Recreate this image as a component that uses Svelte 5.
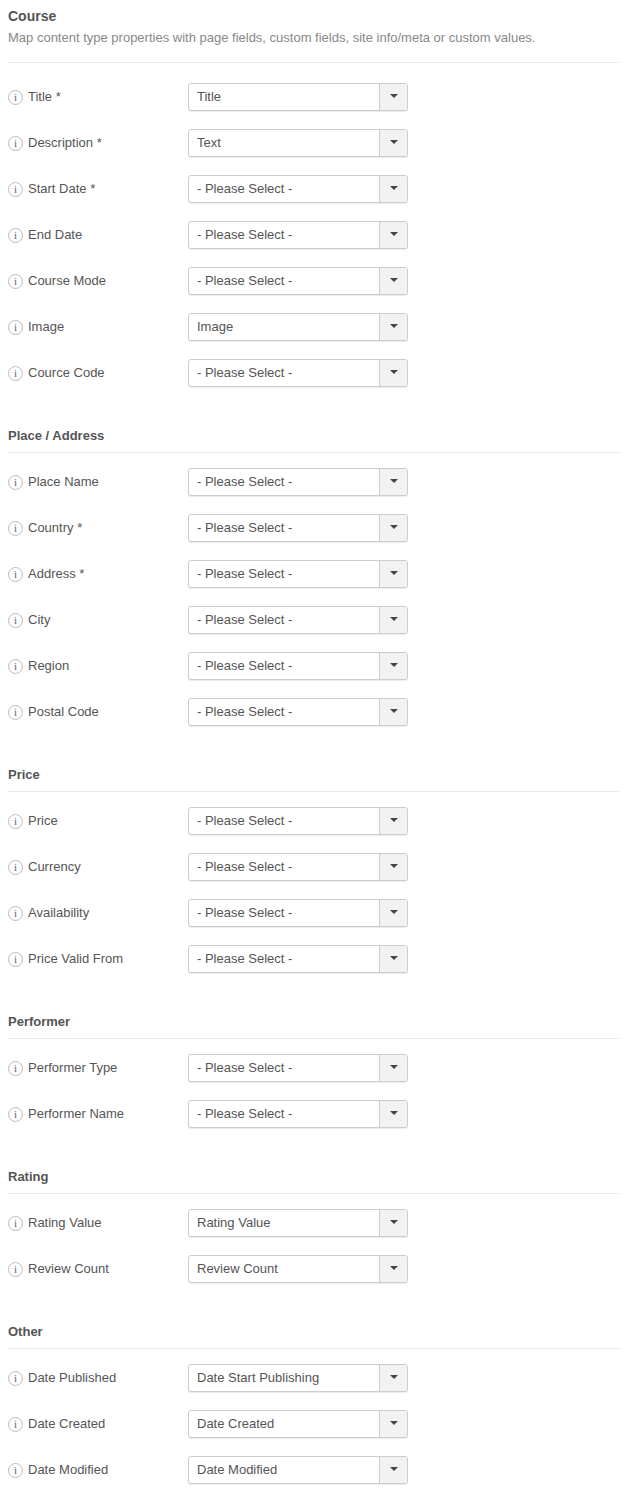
<script>
  const P = '- Please Select -';
  const sections = [
    { title: 'Course', desc: 'Map content type properties with page fields, custom fields, site info/meta or custom values.', rows: [
      ['Title *', 'Title'], ['Description *', 'Text'], ['Start Date *', P], ['End Date', P], ['Course Mode', P], ['Image', 'Image'], ['Cource Code', P] ] },
    { title: 'Place / Address', rows: [
      ['Place Name', P], ['Country *', P], ['Address *', P], ['City', P], ['Region', P], ['Postal Code', P] ] },
    { title: 'Price', rows: [
      ['Price', P], ['Currency', P], ['Availability', P], ['Price Valid From', P] ] },
    { title: 'Performer', rows: [
      ['Performer Type', P], ['Performer Name', P] ] },
    { title: 'Rating', rows: [
      ['Rating Value', 'Rating Value'], ['Review Count', 'Review Count'] ] },
    { title: 'Other', rows: [
      ['Date Published', 'Date Start Publishing'], ['Date Created', 'Date Created'], ['Date Modified', 'Date Modified'] ] }
  ];
</script>

<div class="page">
  {#each sections as s, i}
    <section class:first={i === 0}>
      <header class:main={i === 0}>
        <h3>{s.title}</h3>
        {#if s.desc}<p>{s.desc}</p>{/if}
      </header>
      <div class="rows">
        {#each s.rows as r}
          <div class="row">
            <label>
              <span class="info">i</span>
              <span class="name">{r[0]}</span>
            </label>
            <div class="select">
              <div class="value">{r[1]}</div>
              <div class="caret"><i></i></div>
            </div>
          </div>
        {/each}
      </div>
    </section>
  {/each}
</div>

<style>
  :global(body) {
    margin: 0;
    background: #fff;
  }
  .page {
    box-sizing: border-box;
    width: 630px;
    height: 1498px;
    overflow: hidden;
    padding: 8px 10px 0 8px;
    font-family: "Liberation Sans", Arial, sans-serif;
    font-size: 13px;
    color: #555;
  }
  section {
    margin-top: 40px;
  }
  section.first {
    margin-top: 0;
  }
  header {
    height: 25px;
    border-bottom: 1px solid #ebebeb;
    margin-bottom: 15px;
  }
  header.main {
    height: 54px;
    margin-bottom: 20px;
  }
  h3 {
    margin: 0;
    padding-top: 1px;
    font-size: 13px;
    line-height: 16px;
    font-weight: 700;
    color: #555;
  }
  header.main h3 {
    padding-top: 0;
    font-size: 14px;
  }
  p {
    margin: 6px 0 0;
    font-size: 13px;
    line-height: 16px;
    color: #888;
  }
  .rows {
    display: flex;
    flex-direction: column;
    gap: 18px;
  }
  .row {
    display: flex;
    align-items: center;
    height: 28px;
  }
  label {
    display: flex;
    align-items: center;
    gap: 5px;
    width: 180px;
    flex: none;
    color: #555;
  }
  .name {
    padding-bottom: 2px;
  }
  .info {
    box-sizing: border-box;
    flex: none;
    width: 15px;
    height: 15px;
    margin-top: 1px;
    border: 1px solid #bbb;
    border-radius: 50%;
    font-family: "Liberation Serif", serif;
    font-size: 11px;
    line-height: 13px;
    text-align: center;
    color: #666;
  }
  .select {
    box-sizing: border-box;
    display: flex;
    width: 220px;
    height: 28px;
    border: 1px solid #ccc;
    border-radius: 3px;
    box-shadow: 0 1px 1px rgba(0, 0, 0, 0.08);
    background: #fff;
  }
  .value {
    flex: 1;
    padding-left: 8px;
    line-height: 26px;
    color: #555;
  }
  .caret {
    box-sizing: border-box;
    width: 28px;
    flex: none;
    display: flex;
    align-items: center;
    justify-content: center;
    border-left: 1px solid #ccc;
    background: #f2f2f2;
    border-radius: 0 2px 2px 0;
  }
  .caret i {
    width: 0;
    height: 0;
    margin-bottom: 2px;
    border-left: 4px solid transparent;
    border-right: 4px solid transparent;
    border-top: 4px solid #444;
  }
</style>
